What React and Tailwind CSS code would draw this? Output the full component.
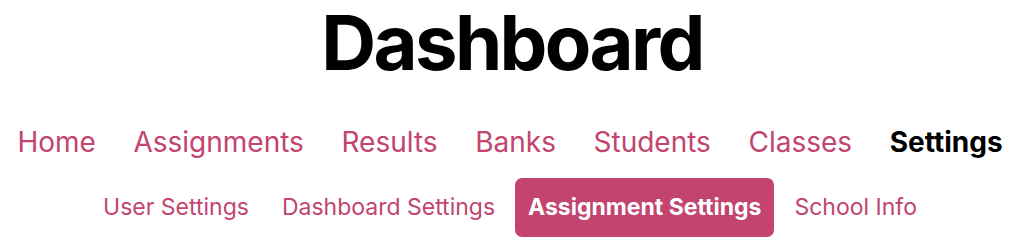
export default function App() {
  const nav = ["Home", "Assignments", "Results", "Banks", "Students", "Classes", "Settings"];
  const sub = ["User Settings", "Dashboard Settings", "Assignment Settings", "School Info"];
  return (
    <div className="w-[1024px] h-[252px] bg-white flex flex-col items-center" style={{ fontFamily: "Inter, 'Noto Sans', sans-serif" }}>
      <h1 className="text-[76px] leading-[84px] font-bold tracking-[-0.035em] text-black">Dashboard</h1>
      <nav className="mt-[42px] flex items-center gap-[37.6px] text-[28px] leading-[32px] pr-[4px]">
        {nav.map((n) => (
          <span key={n} className={n === "Settings" ? "font-bold text-black" : "text-[#c2446f]"}>{n}</span>
        ))}
      </nav>
      <div className="mt-[20px] flex items-center gap-[7px] text-[23px] leading-[31px] pr-[4px]">
        {sub.map((s) => (
          <span
            key={s}
            className={
              s === "Assignment Settings"
                ? "px-[13px] py-[14px] rounded-[7px] bg-[#c2446f] text-white font-bold"
                : "px-[13px] py-[14px] text-[#c2446f]"
            }
          >
            {s}
          </span>
        ))}
      </div>
    </div>
  );
}
